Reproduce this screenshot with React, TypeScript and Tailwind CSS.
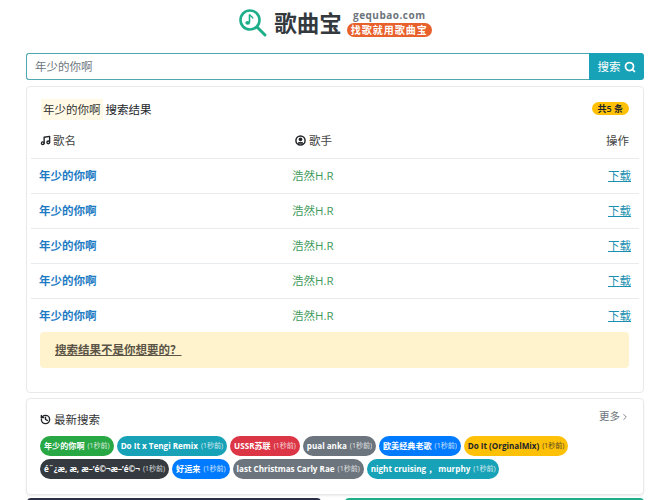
import { Music, Search, History, ChevronRight } from 'lucide-react';

const rows = [1, 2, 3, 4, 5];

const recent = [
  [
    { name: '年少的你啊', color: 'bg-[#28a745] text-white' },
    { name: 'Do It x Tengi Remix', color: 'bg-[#17a2b8] text-white' },
    { name: 'USSR苏联', color: 'bg-[#dc3545] text-white' },
    { name: 'pual anka', color: 'bg-[#6c757d] text-white' },
    { name: '欧美经典老歌', color: 'bg-[#007bff] text-white' },
    { name: 'Do It (OrginalMix)', color: 'bg-[#ffc107] text-[#212529]' },
  ],
  [
    { name: 'é¨¿æ, æ, æ–’é©¬æ–’é©¬', color: 'bg-[#343a40] text-white' },
    { name: '好运来', color: 'bg-[#007bff] text-white' },
    { name: 'last Christmas Carly Rae', color: 'bg-[#6c757d] text-white' },
    { name: 'night cruising ， murphy', color: 'bg-[#17a2b8] text-white' },
  ],
];

function Logo() {
  return (
    <svg width="30" height="30" viewBox="0 0 30 30" fill="none" className="shrink-0">
      <circle cx="12" cy="12" r="9.5" stroke="#1fae8a" strokeWidth="2.6" />
      <path d="M19 19l8 8" stroke="#1fae8a" strokeWidth="3" strokeLinecap="round" />
      <path d="M11.5 6.5v8" stroke="#1fae8a" strokeWidth="1.6" />
      <path d="M11.5 6.5c1 2 3 2 3.5 4" stroke="#1fae8a" strokeWidth="1.4" />
      <ellipse cx="9.7" cy="14.8" rx="2.4" ry="1.9" fill="#1fae8a" />
    </svg>
  );
}

export default function App() {
  return (
    <div className="h-[500px] w-[660px] overflow-hidden bg-white pr-[16px] pl-[26px] font-['Open_Sans','Noto_Sans_CJK_SC',sans-serif] text-[11.5px] text-[#212529]">
      <div className="flex h-[53px] items-start justify-center pt-[6px]">
        <div className="flex items-center">
          <Logo />
          <span className="mt-[3px] ml-[6px] text-[22.5px] leading-[30px] font-bold text-[#33393d]">歌曲宝</span>
          <div className="ml-[5px] flex flex-col items-center">
            <span className="text-[10px] leading-[12px] font-bold tracking-[0.5px] text-[#6c757d]">gequbao.com</span>
            <span className="mt-[2px] rounded-full bg-[#e8602c] px-[4px] text-[10px] leading-[14px] font-bold tracking-[1px] whitespace-nowrap text-white">找歌就用歌曲宝</span>
          </div>
        </div>
      </div>

      <div className="flex h-[27px]">
        <div className="flex flex-1 items-center rounded-l-[3px] border border-r-0 border-[#4fa8b0] px-[8px] text-[#6c757d]">年少的你啊</div>
        <div className="flex w-[55px] items-center justify-center gap-[3px] rounded-r-[3px] bg-[#17a2b8] text-white">
          搜索
          <Search size={12} strokeWidth={3.5} />
        </div>
      </div>

      <div className="mt-[6px] h-[307px] rounded-[4px] border border-[#e9e9e9] px-[4px]">
        <div className="flex h-[45px] items-center justify-between pr-[10px] pl-[10px]">
          <div className="flex items-center gap-[3px]">
            <span className="bg-[#fff9e6] px-[2px] py-[2px] text-[#333]">年少的你啊</span>
            <span>搜索结果</span>
          </div>
          <span className="mb-[2px] rounded-full bg-[#ffc107] px-[6px] text-[9px] leading-[13px] font-semibold">共5 条</span>
        </div>
        <div className="flex h-[26px] items-center pb-[9px] text-[#444]">
          <div className="flex w-[264px] items-center gap-[2px] pl-[9px]">
            <Music size={11} strokeWidth={3} className="text-[#212529]" />
            歌名
          </div>
          <div className="flex flex-1 items-center gap-[3px]">
            <svg width="11" height="11" viewBox="0 0 12 12" className="shrink-0">
              <circle cx="6" cy="6" r="5" fill="none" stroke="#212529" strokeWidth="1.6" />
              <circle cx="6" cy="4.8" r="2" fill="#212529" />
              <path d="M2.5 9.5c1-2 6-2 7 0" fill="#212529" stroke="#212529" />
            </svg>
            歌手
          </div>
          <div className="pr-[10px]">操作</div>
        </div>
        {rows.map((n) => (
          <div key={n} className="flex h-[35px] items-center border-t border-[#e9ecef]">
            <div className="w-[261px] pl-[8px] font-bold text-[#1d7bc4]">年少的你啊</div>
            <div className="flex-1 text-[#3f9a5b]">浩然H.R</div>
            <div className="pr-[8px] text-[#1a8fb0] underline">下载</div>
          </div>
        ))}
        <div className="mr-[10px] -mt-px ml-[9px] flex h-[36px] items-center rounded-[4px] bg-[#fff3cd] px-[15px] font-semibold text-[#5a5346] underline">
          搜索结果不是你想要的？
        </div>
      </div>

      <div className="mt-[5px] h-[97px] rounded-[4px] border border-[#e9e9e9] px-[13px] pt-[10px] shadow-[0_1px_2px_rgba(0,0,0,0.08)]">
        <div className="flex items-center justify-between">
          <div className="flex items-center gap-[3px] text-[#333]">
            <History size={11} strokeWidth={3} className="text-[#212529]" />
            最新搜索
          </div>
          <div className="mb-[5px] flex items-center text-[10.5px] text-[#6c757d]">
            更多
            <ChevronRight size={10} />
          </div>
        </div>
        <div className="mt-[6px] flex flex-col gap-[3px]">
          {recent.map((line, i) => (
            <div key={i} className="flex gap-[3px]">
              {line.map((item) => (
                <span key={item.name} className={`flex h-[20px] items-center rounded-full px-[4px] text-[8.1px] font-bold whitespace-nowrap ${item.color}`}>
                  {item.name}
                  <span className="ml-[3px] text-[7px] font-normal opacity-80">(1秒前)</span>
                </span>
              ))}
            </div>
          ))}
        </div>
      </div>

      <div className="mt-[3px] flex h-[10px] justify-between">
        <div className="ml-[1px] w-[294px] rounded-t-[4px] bg-[#2a2f45]" />
        <div className="w-[299px] rounded-t-[4px] bg-[#1fae8a]" />
      </div>
    </div>
  );
}
